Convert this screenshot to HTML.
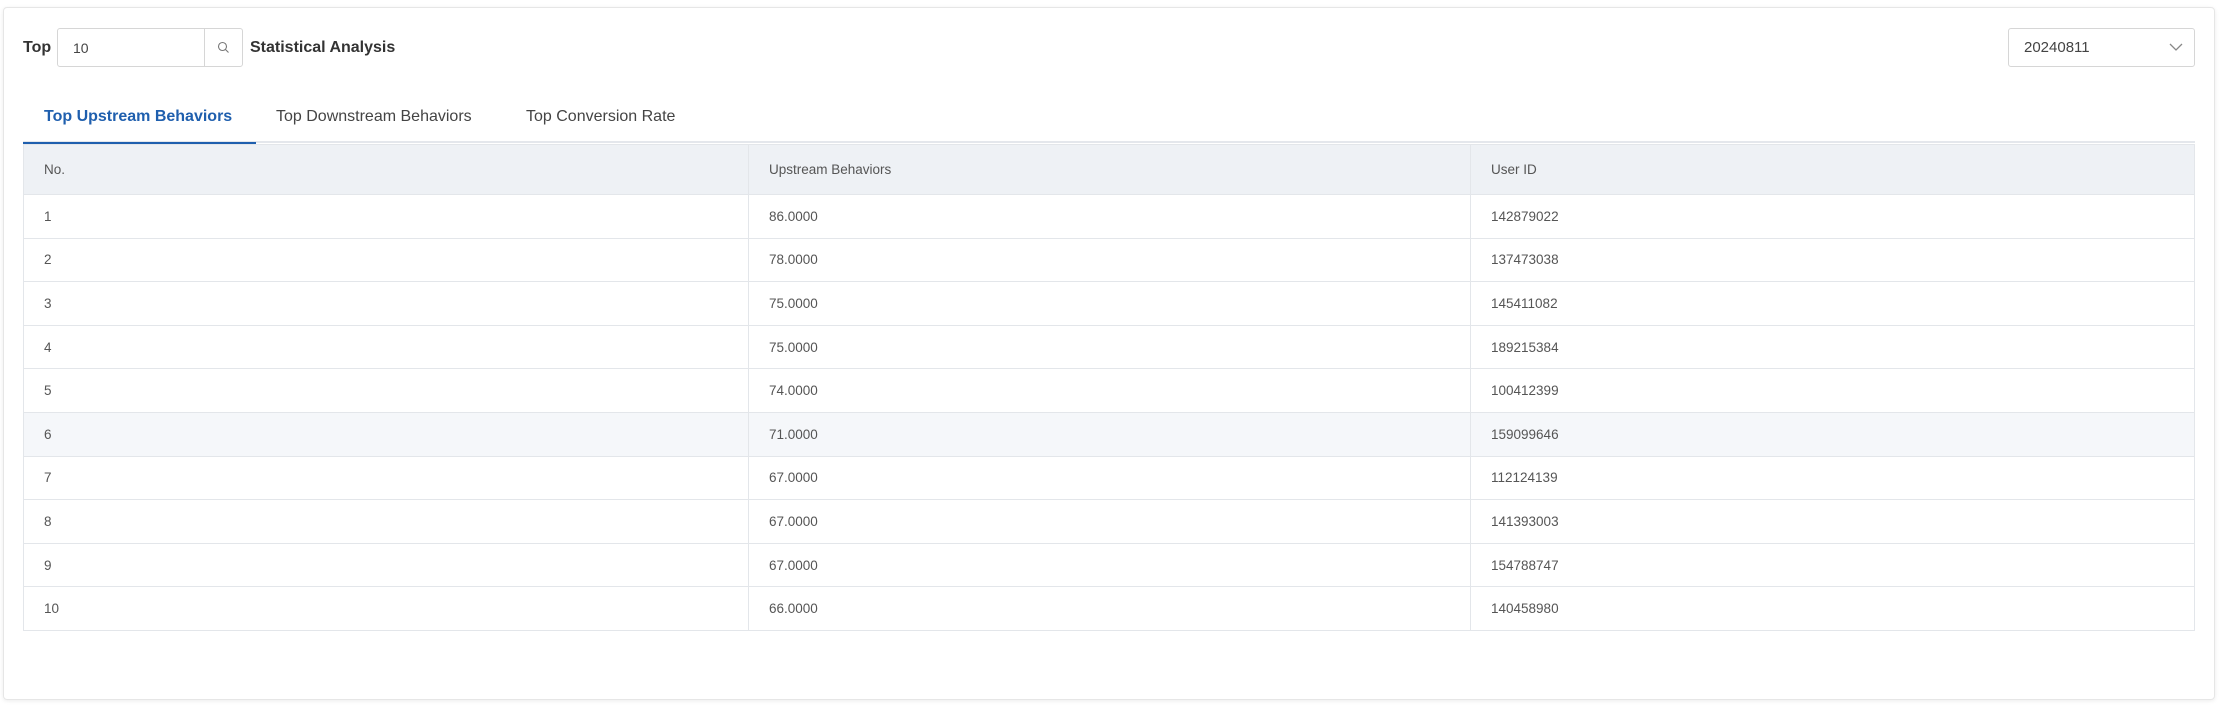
<!DOCTYPE html>
<html><head><meta charset="utf-8"><style>
*{box-sizing:border-box;margin:0;padding:0}
body{width:2226px;height:709px;background:#fff;font-family:"Liberation Sans",sans-serif;position:relative;overflow:hidden;color:#333}
.card{position:absolute;left:3px;top:7px;width:2212px;height:693px;border:1px solid #e6e6e6;border-radius:4px;box-shadow:0 1px 4px rgba(0,0,0,.08)}
.abs{position:absolute}
.b{font-weight:bold;font-size:16px;color:#333}
.inp{left:57px;top:28px;width:186px;height:39px;border:1px solid #d6d6d6;border-radius:3px}
.sel{left:2008px;top:28px;width:187px;height:39px;border:1px solid #d6d6d6;border-radius:3px}
.tab{top:108px;font-size:16px;color:#444}
table{position:absolute;left:23px;top:144px;width:2172px;border-collapse:collapse;font-size:13.5px;color:#555}
td{border:1px solid #e3e6ea;height:43.6px;padding-left:20px}
tr.h td{background:#eef1f5;height:50px}
tr.hv td{background:#f5f7fa}
</style></head><body>
<div class="card"></div>
<div class="abs b" style="left:23px;top:39px">Top</div>
<div class="abs inp"><span class="abs" style="left:15px;top:11px;font-size:14px;color:#444">10</span>
<div class="abs" style="left:146px;top:0;width:1px;height:37px;background:#d6d6d6"></div>
<svg class="abs" style="left:159px;top:12px" width="13" height="13" viewBox="0 0 13 13"><circle cx="5.5" cy="5.5" r="4" fill="none" stroke="#777" stroke-width="1.1"/><path d="M8.5 8.5L11.5 11.5" stroke="#777" stroke-width="1.1"/></svg></div>
<div class="abs b" style="left:250px;top:39px">Statistical Analysis</div>
<div class="abs sel"><span class="abs" style="left:15px;top:10px;font-size:15px;color:#444">20240811</span>
<svg class="abs" style="left:160px;top:14px" width="14" height="9" viewBox="0 0 14 9"><path d="M1 1L7 7L13 1" fill="none" stroke="#888" stroke-width="1.3"/></svg></div>
<div class="abs tab" style="left:44px;color:#1f5fae;font-weight:bold">Top Upstream Behaviors</div>
<div class="abs tab" style="left:276px">Top Downstream Behaviors</div>
<div class="abs tab" style="left:526px">Top Conversion Rate</div>
<div class="abs" style="left:23px;top:141px;width:2172px;height:2px;background:#e4e7ec"></div>
<div class="abs" style="left:23px;top:142px;width:233px;height:3px;background:#1f5fae"></div>
<table>
<tr class="h"><td style="width:725px">No.</td><td style="width:722px">Upstream Behaviors</td><td>User ID</td></tr>
<tr><td>1</td><td>86.0000</td><td>142879022</td></tr>
<tr><td>2</td><td>78.0000</td><td>137473038</td></tr>
<tr><td>3</td><td>75.0000</td><td>145411082</td></tr>
<tr><td>4</td><td>75.0000</td><td>189215384</td></tr>
<tr><td>5</td><td>74.0000</td><td>100412399</td></tr>
<tr class="hv"><td>6</td><td>71.0000</td><td>159099646</td></tr>
<tr><td>7</td><td>67.0000</td><td>112124139</td></tr>
<tr><td>8</td><td>67.0000</td><td>141393003</td></tr>
<tr><td>9</td><td>67.0000</td><td>154788747</td></tr>
<tr><td>10</td><td>66.0000</td><td>140458980</td></tr>
</table>
</body></html>
